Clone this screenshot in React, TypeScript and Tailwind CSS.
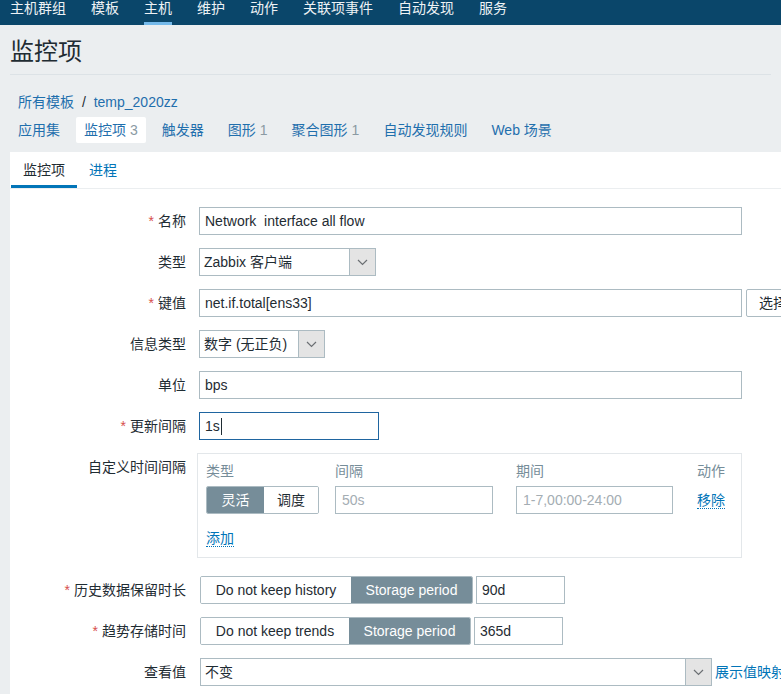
import React from 'react';

const navItems = ['主机群组', '模板', '主机', '维护', '动作', '关联项事件', '自动发现', '服务'];

const hostTabs: { label: string; count?: string; active?: boolean }[] = [
  { label: '应用集' },
  { label: '监控项', count: '3', active: true },
  { label: '触发器' },
  { label: '图形', count: '1' },
  { label: '聚合图形', count: '1' },
  { label: '自动发现规则' },
  { label: 'Web 场景' },
];

const Chevron = () => (
  <svg width="11" height="7" viewBox="0 0 11 7">
    <path d="M1 1l4.5 4.5L10 1" stroke="#6b6f73" strokeWidth="1.2" fill="none" />
  </svg>
);

const Label = ({ text, required }: { text: string; required?: boolean }) => (
  <div className="w-[176px] shrink-0 text-right leading-[20px]">
    {required && <span className="text-[#d64e4e] mr-[4px]">*</span>}
    {text}
  </div>
);

const Select = ({ value, width }: { value: string; width: string }) => (
  <div className={`flex h-[28px] border border-[#acbbc2] bg-white ${width}`}>
    <div className="flex-1 pl-[4px] leading-[26px] whitespace-nowrap">{value}</div>
    <div className="w-[26px] shrink-0 border-l border-[#acbbc2] bg-[#e4e4e4] flex items-center justify-center">
      <Chevron />
    </div>
  </div>
);

const TextInput = ({ value, width, focus }: { value: string; width: string; focus?: boolean }) => (
  <div
    className={`h-[28px] border bg-white pl-[5px] leading-[26px] whitespace-pre ${width} ${
      focus ? 'border-[#1f65a0]' : 'border-[#acbbc2]'
    }`}
  >
    {value}
    {focus && <span className="inline-block w-px h-[17px] bg-[#1f2c33] align-middle ml-[1px] -mt-[2px]" />}
  </div>
);

const Segmented = ({ options, active, widths }: { options: string[]; active: number; widths: string[] }) => (
  <div className="flex w-fit h-[28px] border border-[#acbbc2] rounded-[2px] overflow-hidden shrink-0">
    {options.map((o, i) => (
      <div
        key={o}
        className={`${widths[i]} flex items-center justify-center whitespace-nowrap ${
          i === active ? 'bg-[#768d99] text-white' : 'bg-white text-[#1f2c33]'
        }`}
      >
        {o}
      </div>
    ))}
  </div>
);

export default function App() {
  return (
    <div className="h-[694px] overflow-hidden bg-[#ebeef0] text-[14px] text-[#1f2c33] font-['Liberation_Sans','Noto_Sans_CJK_SC',sans-serif]">
      {/* top menu */}
      <nav className="h-[25px] bg-[#0a466a] flex gap-[25px] pl-[10px]">
        {navItems.map((n) => (
          <div
            key={n}
            className={`h-[25px] leading-[16px] whitespace-nowrap text-[#eef2f5] ${
              n === '主机' ? 'border-b-[3px] border-[#74b9ea]' : ''
            }`}
          >
            {n}
          </div>
        ))}
      </nav>

      <div className="px-[10px]">
        <h1 className="mt-[13px] text-[24px] leading-[28px] text-[#1f2c33]">监控项</h1>
        <div className="mt-[8px] border-b border-[#dce2e6]" />
        <div className="mt-[17px] pl-[8px] leading-[20px] text-[#1f6fad]">
          所有模板 <span className="mx-[4px] text-[#1f2c33]">/</span> temp_2020zz
        </div>
        <div className="mt-[5px] flex gap-[8px]">
          {hostTabs.map((t) => (
            <div
              key={t.label}
              className={`h-[26px] px-[8px] leading-[26px] whitespace-nowrap text-[#1f6fad] rounded-[2px] ${
                t.active ? 'bg-white' : ''
              }`}
            >
              {t.label}
              {t.count && <span className="ml-[4px] text-[#8a9aa3]">{t.count}</span>}
            </div>
          ))}
        </div>
      </div>

      {/* main panel */}
      <div className="mt-[9px] ml-[10px] bg-white h-[600px]">
        <div className="flex pl-[1px] border-b border-[#ebeef0] h-[37px]">
          <div className="px-[12px] h-[36px] leading-[34px] border-b-[3px] border-[#0275b8] pt-[1px]">监控项</div>
          <div className="px-[12px] h-[36px] leading-[34px] pt-[1px] text-[#0275b8]">进程</div>
        </div>

        <div className="pt-[18px] flex flex-col">
          <div className="flex items-center">
            <Label text="名称" required />
            <div className="ml-[13px]">
              <TextInput value="Network  interface all flow" width="w-[543px]" />
            </div>
          </div>

          <div className="flex items-center mt-[13px]">
            <Label text="类型" />
            <div className="ml-[13px]">
              <Select value="Zabbix 客户端" width="w-[177px]" />
            </div>
          </div>

          <div className="flex items-center mt-[13px]">
            <Label text="键值" required />
            <div className="ml-[13px] flex gap-[4px]">
              <TextInput value="net.if.total[ens33]" width="w-[543px]" />
              <div className="h-[28px] px-[12px] border border-[#acbbc2] rounded-[2px] leading-[26px] whitespace-nowrap">
                选择
              </div>
            </div>
          </div>

          <div className="flex items-center mt-[13px]">
            <Label text="信息类型" />
            <div className="ml-[13px]">
              <Select value="数字 (无正负)" width="w-[126px]" />
            </div>
          </div>

          <div className="flex items-center mt-[13px]">
            <Label text="单位" />
            <div className="ml-[13px]">
              <TextInput value="bps" width="w-[543px]" />
            </div>
          </div>

          <div className="flex items-center mt-[13px]">
            <Label text="更新间隔" required />
            <div className="ml-[13px]">
              <TextInput value="1s" width="w-[180px]" focus />
            </div>
          </div>

          <div className="flex items-start mt-[13px]">
            <div className="pt-[4px]">
              <Label text="自定义时间间隔" />
            </div>
            <div className="ml-[11px] w-[545px] border border-[#e3e7ea] pt-[8px] pb-[9px] pl-[8px]">
              <div className="grid grid-cols-[129px_181px_181px_1fr] h-[18px] leading-[18px] text-[#768d99]">
                <div>类型</div>
                <div>间隔</div>
                <div>期间</div>
                <div>动作</div>
              </div>
              <div className="grid grid-cols-[129px_181px_181px_1fr] mt-[6px] items-center">
                <div>
                  <Segmented options={['灵活', '调度']} active={0} widths={['w-[57px]', 'w-[54px]']} />
                </div>
                <div className="h-[28px] w-[158px] border border-[#acbbc2] pl-[6px] leading-[26px] text-[#a4adb3]">50s</div>
                <div className="h-[28px] w-[157px] border border-[#acbbc2] pl-[6px] leading-[26px] text-[#a4adb3]">
                  1-7,00:00-24:00
                </div>
                <div>
                  <span className="text-[#0275b8] border-b border-dotted border-[#0275b8] leading-[18px]">移除</span>
                </div>
              </div>
              <div className="mt-[14px] leading-[20px]">
                <span className="text-[#0275b8] border-b border-dotted border-[#0275b8]">添加</span>
              </div>
            </div>
          </div>

          <div className="flex items-center mt-[18px]">
            <Label text="历史数据保留时长" required />
            <div className="ml-[14px] flex gap-[3px]">
              <Segmented
                options={['Do not keep history', 'Storage period']}
                active={1}
                widths={['w-[150px]', 'w-[121px]']}
              />
              <TextInput value="90d" width="w-[89px]" />
            </div>
          </div>

          <div className="flex items-center mt-[13px]">
            <Label text="趋势存储时间" required />
            <div className="ml-[14px] flex gap-[3px]">
              <Segmented
                options={['Do not keep trends', 'Storage period']}
                active={1}
                widths={['w-[148px]', 'w-[121px]']}
              />
              <TextInput value="365d" width="w-[89px]" />
            </div>
          </div>

          <div className="flex items-center mt-[13px]">
            <Label text="查看值" />
            <div className="ml-[14px] flex items-center gap-[3px]">
              <Select value="不变" width="w-[512px]" />
              <span className="text-[#0275b8] whitespace-nowrap">展示值映射</span>
            </div>
          </div>
        </div>
      </div>
    </div>
  );
}
